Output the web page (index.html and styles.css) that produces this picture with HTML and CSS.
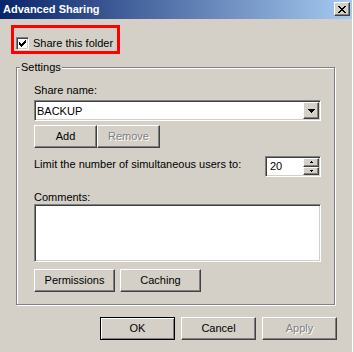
FILE: index.html
```html
<!DOCTYPE html>
<html lang="en">
<head>
    <meta charset="UTF-8">
    <meta name="viewport" content="width=device-width, initial-scale=1.0">
    <title>Advanced Sharing</title>
    <link rel="stylesheet" href="styles.css">
</head>
<body>
    <div class="window">
        <div class="titlebar">
            <span class="title">Advanced Sharing</span>
            <button class="btn close-btn" type="button">
                <svg width="8" height="7" viewBox="0 0 8 7" shape-rendering="crispEdges">
                    <path d="M0 0h2v1h-2z M6 0h2v1h-2z M1 1h2v1h-2z M5 1h2v1h-2z M2 2h4v1h-4z M3 3h2v1h-2z M2 4h4v1h-4z M1 5h2v1h-2z M5 5h2v1h-2z M0 6h2v1h-2z M6 6h2v1h-2z" fill="#000"/>
                </svg>
            </button>
        </div>

        <div class="content">
            <label class="share-toggle">
                <span class="checkbox">
                    <svg width="7" height="7" viewBox="0 0 7 7" shape-rendering="crispEdges">
                        <path d="M6 0h1v1h-1z M5 1h2v1h-2z M0 2h1v1h-1z M4 2h3v1h-3z M0 3h2v1h-2z M3 3h3v1h-3z M0 4h5v1h-5z M1 5h3v1h-3z M2 6h1v1h-1z" fill="#000"/>
                    </svg>
                </span>
                <span>Share this folder</span>
            </label>

            <div class="group">
                <span class="group-title">Settings</span>

                <div class="field-label">Share name:</div>
                <div class="combo">
                    <span class="combo-value">BACKUP</span>
                    <span class="btn combo-btn">
                        <svg width="7" height="4" viewBox="0 0 7 4" shape-rendering="crispEdges">
                            <path d="M0 0h7v1h-7z M1 1h5v1h-5z M2 2h3v1h-3z M3 3h1v1h-1z" fill="#000"/>
                        </svg>
                    </span>
                </div>

                <div class="btn-row">
                    <button class="btn share-btn" type="button">Add</button>
                    <button class="btn share-btn" type="button" disabled>Remove</button>
                </div>

                <div class="limit-row">
                    <span class="limit-label">Limit the number of simultaneous users to:</span>
                    <div class="spinner">
                        <span class="spinner-value">20</span>
                        <span class="spin-buttons">
                            <span class="btn spin-btn">
                                <svg width="3" height="2" viewBox="0 0 3 2" shape-rendering="crispEdges">
                                    <path d="M1 0h1v1h-1z M0 1h3v1h-3z" fill="#000"/>
                                </svg>
                            </span>
                            <span class="btn spin-btn">
                                <svg width="3" height="2" viewBox="0 0 3 2" shape-rendering="crispEdges">
                                    <path d="M0 0h3v1h-3z M1 1h1v1h-1z" fill="#000"/>
                                </svg>
                            </span>
                        </span>
                    </div>
                </div>

                <div class="field-label comments-label">Comments:</div>
                <div class="textbox"></div>

                <div class="btn-row perms-row">
                    <button class="btn wide-btn" type="button">Permissions</button>
                    <button class="btn wide-btn" type="button">Caching</button>
                </div>
            </div>

            <div class="dialog-buttons">
                <button class="btn dialog-btn default-btn" type="button">OK</button>
                <button class="btn dialog-btn" type="button">Cancel</button>
                <button class="btn dialog-btn" type="button" disabled>Apply</button>
            </div>
        </div>
    </div>
</body>
</html>
```

FILE: styles.css
```css
body {
    margin: 0;
    background-color: #d4d0c8;
    font-family: "Liberation Sans", Arial, sans-serif;
    font-size: 11px;
    line-height: 13px;
    color: #000;
}

.window {
    width: 352px;
    height: 352px;
    background-color: #d4d0c8;
    border-right: 1px solid #fff;
    overflow: hidden;
}

/* title bar */
.titlebar {
    height: 19px;
    display: flex;
    justify-content: space-between;
    align-items: flex-start;
    padding: 0 2px 0 3px;
    background: linear-gradient(to right, #0a246a, #a6caf0);
}

.title {
    color: #fff;
    font-weight: bold;
    line-height: 19px;
}

/* raised 3d button look */
.btn {
    box-sizing: border-box;
    border: 1px solid;
    border-color: #fff #404040 #404040 #fff;
    box-shadow: inset -1px -1px 0 #808080;
    background-color: #d4d0c8;
    font: inherit;
    color: #000;
    padding: 0;
    margin: 0;
}

.btn:disabled {
    color: #808080;
    text-shadow: 1px 1px 0 #fff;
}

.close-btn {
    margin-top: 2px;
    width: 16px;
    height: 14px;
    display: flex;
    justify-content: center;
    align-items: center;
}

.content {
    padding-top: 6px;
}

/* red highlight around the checkbox */
.share-toggle {
    box-sizing: border-box;
    display: flex;
    align-items: center;
    gap: 4px;
    width: 109px;
    height: 29px;
    margin-left: 11px;
    padding: 8px 0 0 2px;
    border: 3px solid #ff0000;
}

.checkbox {
    box-sizing: border-box;
    width: 13px;
    height: 13px;
    padding: 2px;
    display: flex;
    background-color: #fff;
    border: 1px solid;
    border-color: #808080 #fff #fff #808080;
    box-shadow: inset 1px 1px 0 #404040, inset -1px -1px 0 #d4d0c8;
}

/* settings group box */
.group {
    position: relative;
    box-sizing: border-box;
    width: 319px;
    margin: 13px 0 0 16px;
    padding: 16px 13px 12px 17px;
    border: 1px solid #808080;
    box-shadow: 1px 1px 0 #fff, inset 1px 1px 0 #fff;
}

.group-title {
    position: absolute;
    top: -7px;
    left: 3px;
    padding: 0 1px;
    background-color: #d4d0c8;
}

.field-label {
    margin-bottom: 3px;
}

/* sunken fields */
.combo,
.spinner,
.textbox {
    box-sizing: border-box;
    background-color: #fff;
    border: 1px solid;
    border-color: #808080 #fff #fff #808080;
    box-shadow: inset 1px 1px 0 #404040, inset -1px -1px 0 #d4d0c8;
}

.combo {
    height: 21px;
    display: flex;
    align-items: center;
    padding: 1px;
}

.combo-value {
    padding: 2px 0 0 1px;
}

.combo-btn {
    margin-left: auto;
    width: 16px;
    height: 17px;
    display: flex;
    justify-content: center;
    align-items: center;
}

.btn-row {
    display: flex;
    margin-top: 4px;
}

.share-btn {
    width: 63px;
    height: 23px;
}

.limit-row {
    display: flex;
    justify-content: space-between;
    align-items: flex-start;
    margin-top: 8px;
}

.limit-label {
    padding-top: 2px;
}

.spinner {
    width: 56px;
    height: 21px;
    display: flex;
    align-items: center;
    padding: 1px;
}

.spinner-value {
    padding-left: 3px;
}

.spin-buttons {
    margin-left: auto;
    display: flex;
    flex-direction: column;
    width: 16px;
    height: 17px;
}

.spin-btn {
    flex: 1;
    display: flex;
    justify-content: center;
    align-items: center;
}

.comments-label {
    margin: 14px 0 0;
}

.textbox {
    height: 58px;
}

.perms-row {
    gap: 5px;
    margin-top: 7px;
}

.wide-btn {
    width: 81px;
    height: 23px;
}

/* OK / Cancel / Apply */
.dialog-buttons {
    display: flex;
    justify-content: flex-end;
    gap: 6px;
    margin-top: 12px;
    padding-right: 15px;
}

.dialog-btn {
    width: 75px;
    height: 23px;
}

.default-btn {
    border-color: #000;
    box-shadow: inset 1px 1px 0 #fff, inset -1px -1px 0 #808080;
}
```
